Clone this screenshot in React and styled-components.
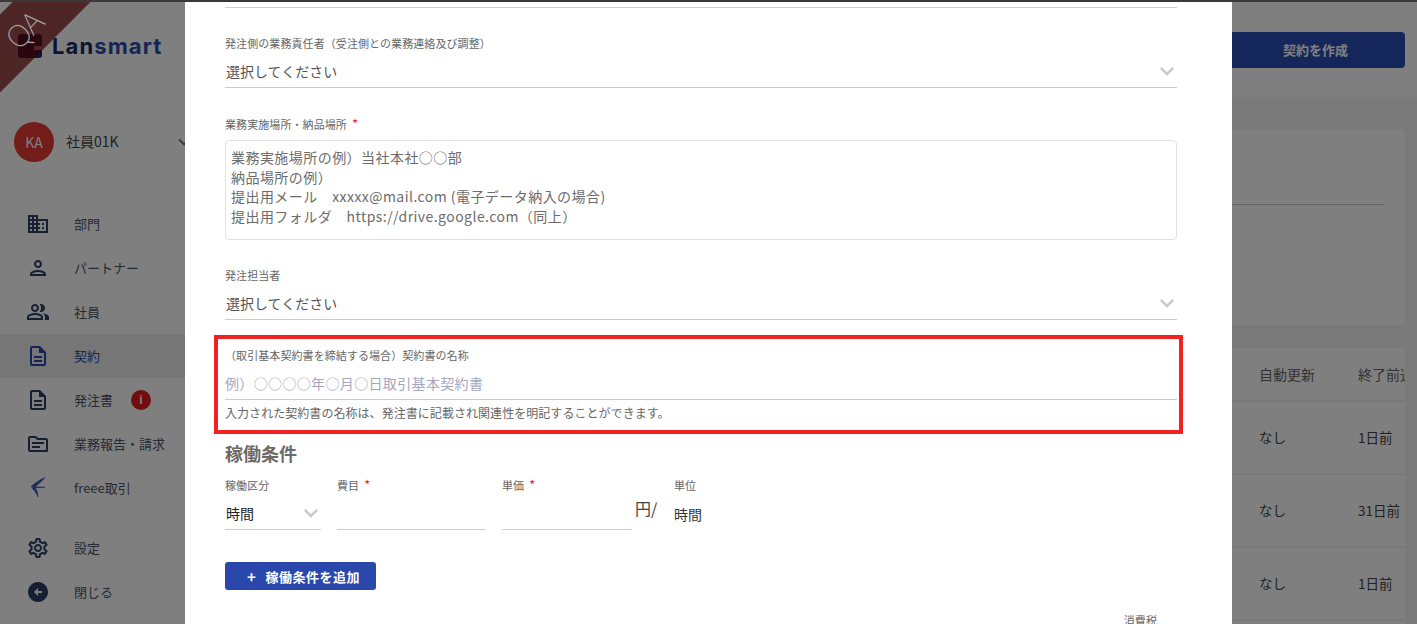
import React from 'react';
import styled, { createGlobalStyle } from 'styled-components';
import {
  MdDomain,
  MdOutlinePerson,
  MdOutlinePeopleAlt,
  MdOutlineDescription,
  MdOutlineTopic,
  MdOutlineSettings,
  MdArrowCircleLeft,
  MdKeyboardArrowDown,
} from 'react-icons/md';

const GlobalStyle = createGlobalStyle`
  html, body {
    margin: 0;
    padding: 0;
    overflow: hidden;
  }
  body {
    font-family: "Noto Sans CJK JP", "Noto Sans", sans-serif;
    color: #333;
  }
  * {
    box-sizing: border-box;
  }
`;

const Screen = styled.div`
  width: 1417px;
  height: 624px;
  display: flex;
  flex-direction: column;
  overflow: hidden;
`;

const TopStrip = styled.div`
  height: 2px;
  flex: none;
  background: #3a3a3a;
`;

const Shell = styled.div`
  position: relative;
  flex: 1;
  min-height: 0;
  display: flex;
  overflow: hidden;
`;

/* --- sidebar --- */
const Sidebar = styled.aside`
  width: 185px;
  flex: none;
  background: #fff;
  display: flex;
  flex-direction: column;
`;

const Ribbon = styled.div`
  position: absolute;
  left: -74px;
  top: -2px;
  width: 200px;
  height: 55px;
  padding-right: 6px;
  background: rgba(58, 0, 0, 0.7);
  transform: rotate(-45deg);
  display: flex;
  align-items: center;
  justify-content: center;
  color: #a4a4a4;
  font-family: "Noto Sans", sans-serif;
  font-size: 30px;
  font-weight: 200;
  letter-spacing: -1px;
  z-index: 3;
`;

const LogoRow = styled.div`
  height: 60px;
  margin-top: 14px;
  padding: 0 0 0 18px;
  display: flex;
  align-items: center;
  gap: 10px;
`;

const LogoText = styled.div`
  font-family: Inter, sans-serif;
  font-size: 22px;
  font-weight: 700;
  letter-spacing: 1.1px;
  color: #1a2a66;
  span {
    color: #2b4aaa;
  }
`;

const UserRow = styled.div`
  margin-top: 46px;
  height: 40px;
  padding-left: 14px;
  display: flex;
  align-items: center;
  position: relative;
`;

const Avatar = styled.div`
  width: 40px;
  height: 40px;
  border-radius: 50%;
  background: #e53a32;
  color: #fff;
  font-size: 14px;
  display: flex;
  align-items: center;
  justify-content: center;
`;

const UserName = styled.div`
  margin-left: 12px;
  padding-bottom: 2px;
  font-size: 14px;
  color: #444;
`;

const UserCaret = styled(MdKeyboardArrowDown)`
  position: absolute;
  right: -10px;
  top: 9px;
  color: #777;
`;

const Nav = styled.nav`
  margin-top: 40px;
  display: flex;
  flex-direction: column;
`;

const NavItem = styled.div`
  height: 44px;
  padding-left: 26px;
  display: flex;
  align-items: center;
  font-size: 13px;
  color: ${props => (props.$active ? '#2a47ab' : '#4d5566')};
  background: ${props => (props.$active ? '#ececec' : 'transparent')};
  margin-top: ${props => (props.$gap ? '16px' : '0')};

  svg {
    flex: none;
    color: ${props => (props.$active ? '#2a47ab' : '#2f3f66')};
  }
`;

const NavLabel = styled.span`
  margin-left: 24px;
  padding-bottom: 1px;
`;

const AlertDot = styled.span`
  width: 20px;
  height: 20px;
  margin-left: 18px;
  border-radius: 50%;
  background: #e01a1a;
  color: #fff;
  font-size: 12px;
  font-weight: 700;
  font-family: "Liberation Sans", sans-serif;
  display: flex;
  align-items: center;
  justify-content: center;
`;

/* --- page behind the dialog --- */
const Main = styled.main`
  flex: 1;
  min-width: 0;
  background: #f4f4f4;
  display: flex;
  flex-direction: column;
`;

const Header = styled.div`
  height: 95px;
  flex: none;
  background: #fff;
  padding: 30px 12px 0 0;
  display: flex;
  justify-content: flex-end;
`;

const CreateButton = styled.div`
  width: 300px;
  height: 36px;
  background: #2a4cb4;
  border-radius: 4px;
  color: #fff;
  font-size: 13px;
  font-weight: 700;
  display: flex;
  align-items: center;
  justify-content: flex-end;
  padding: 0 57px 2px 0;
`;

const SearchCard = styled.div`
  height: 196px;
  margin: 32px 12px 0 0;
  background: #fff;
  border-radius: 4px;
  display: flex;
  justify-content: flex-end;
  padding: 0 20px 0 0;
`;

const SearchLine = styled.div`
  width: 400px;
  height: 76px;
  border-bottom: 1px solid #ccc;
`;

const TableCard = styled.div`
  flex: 1;
  margin: 23px 12px 0 0;
  background: #fff;
`;

const TableRow = styled.div`
  height: ${props => (props.$head ? '54px' : '73px')};
  border-bottom: 2px solid #f2f2f2;
  display: flex;
  align-items: center;
  font-size: ${props => (props.$head ? '14px' : '13.5px')};
  color: ${props => (props.$head ? '#666' : '#444')};
  padding: 0 0 ${props => (props.$head ? '0' : '2px')} 1074px;
  white-space: nowrap;
  overflow: hidden;
`;

const FlagCell = styled.div`
  width: 99px;
  flex: none;
`;

/* --- dialog --- */
const Overlay = styled.div`
  position: absolute;
  inset: 0;
  background: rgba(0, 0, 0, 0.5);
  z-index: 2;
  padding-left: 185px;
`;

const Dialog = styled.div`
  width: 1047px;
  height: 100%;
  background: #fff;
  padding: 0 55px 0 40px;
  overflow: hidden;
`;

const ClippedLine = styled.div`
  height: 6px;
  border-bottom: 1px solid #d0d0d0;
`;

const Label = styled.div`
  height: 16px;
  line-height: 16px;
  font-size: 11px;
  letter-spacing: 0.08px;
  color: #666;
  white-space: nowrap;
`;

const Required = styled.span`
  margin-left: 5px;
  font-size: 13px;
  line-height: 14px;
  color: #e8242c;
`;

const Field = styled.div`
  margin-top: ${props => props.$top}px;
`;

const Select = styled.div`
  height: 37px;
  padding: 3px 0 0 1px;
  border-bottom: 1px solid #ccc;
  display: flex;
  align-items: center;
  justify-content: space-between;
  font-size: 14px;
  color: ${props => (props.$filled ? '#222' : '#555')};

  svg {
    color: #c8c8c8;
    flex: none;
    margin-right: -4px;
  }
`;

const TextArea = styled.div`
  height: 100px;
  margin-top: 8px;
  padding: 7px 5px;
  border: 1px solid #e2e2e2;
  border-radius: 4px;
  font-size: 14px;
  line-height: 19.7px;
  letter-spacing: 0.45px;
  color: #6c6c6c;
  white-space: pre-line;
`;

const Highlight = styled.div`
  margin: 15px -6px 0 -11px;
  padding: 8px 2px 9px 7px;
  border: 4px solid #f22222;
`;

const Placeholder = styled.div`
  height: 37px;
  padding-top: 3px;
  border-bottom: 1px solid #ccc;
  display: flex;
  align-items: center;
  font-size: 14px;
  letter-spacing: 0.35px;
  color: #a6a6bd;
`;

const Helper = styled.div`
  margin-top: 5px;
  height: 16px;
  line-height: 16px;
  font-size: 12px;
  letter-spacing: 0.05px;
  color: #666;
`;

const SectionTitle = styled.h2`
  margin: 7px 0 0;
  height: 24px;
  line-height: 24px;
  font-size: 18px;
  font-weight: 700;
  color: #6a6a6a;
`;

const ConditionRow = styled.div`
  margin-top: 12px;
  display: flex;
  align-items: flex-start;
`;

const Cell = styled.div`
  width: ${props => props.$width}px;
  margin-right: ${props => props.$gap || 0}px;
  flex: none;
`;

const BlankInput = styled.div`
  height: 37px;
  border-bottom: 1px solid #ccc;
`;

const UnitValue = styled.div`
  height: 37px;
  padding-top: 11px;
  line-height: 20px;
  font-size: 14px;
  color: #333;
`;

const YenMark = styled.div`
  width: 25px;
  margin: 19px 17px 0 0;
  padding-left: 3px;
  flex: none;
  font-size: 16px;
  line-height: 24px;
  color: #444;
  white-space: nowrap;
`;

const AddButton = styled.div`
  margin-top: 32px;
  width: 151px;
  height: 28px;
  padding-left: 6px;
  background: #2a47ab;
  border-radius: 3px;
  color: #fff;
  font-size: 13px;
  font-weight: 700;
  letter-spacing: 0.5px;
  display: flex;
  align-items: center;
  justify-content: center;
  gap: 9px;

  span {
    font-size: 15px;
    line-height: 15px;
  }
`;

const TaxLabel = styled(Label)`
  margin-top: 22px;
  padding-right: 20px;
  text-align: right;
`;

/* drawn marks */
const LogoMark = () => (
  <svg width="24" height="24" viewBox="0 0 24 24">
    <path d="M3 0 H21 a3 3 0 0 1 3 3 V12 H16 V16 H24 V21 a3 3 0 0 1 -3 3 H3 a3 3 0 0 1 -3 -3 V3 a3 3 0 0 1 3 -3 Z" fill="#1a2a66" />
  </svg>
);

const FreeeMark = () => (
  <svg width="24" height="24" viewBox="0 0 24 24" fill="#3550b8" stroke="#3550b8" strokeWidth="0.5" strokeLinejoin="round">
    <path d="M5 10.5 C9 7 14 3.5 19 1.5 C16 5 12 9 8 11 Z" />
    <path d="M5 10.5 L19 11.2 L8 12 Z" />
    <path d="M6 12 C8 14 10.5 17 12 21 C12 17 11 14 9 12 Z" />
  </svg>
);

const Chevron = () => <MdKeyboardArrowDown size={28} />;

const navTop = [
  { label: '部門', icon: <MdDomain size={24} /> },
  { label: 'パートナー', icon: <MdOutlinePerson size={24} /> },
  { label: '社員', icon: <MdOutlinePeopleAlt size={24} /> },
  { label: '契約', icon: <MdOutlineDescription size={24} />, active: true },
  { label: '発注書', icon: <MdOutlineDescription size={24} />, alert: true },
  { label: '業務報告・請求', icon: <MdOutlineTopic size={24} /> },
  { label: 'freee取引', icon: <FreeeMark /> },
];

const rows = [
  ['なし', '1日前'],
  ['なし', '31日前'],
  ['なし', '1日前'],
];

export default function App() {
  return (
    <Screen>
      <GlobalStyle />
      <TopStrip />
      <Shell>
        <Ribbon>QA</Ribbon>
        <Sidebar>
          <LogoRow>
            <LogoMark />
            <LogoText>Lan<span>smart</span></LogoText>
          </LogoRow>
          <UserRow>
            <Avatar>KA</Avatar>
            <UserName>社員01K</UserName>
            <UserCaret size={22} />
          </UserRow>
          <Nav>
            {navTop.map(item => (
              <NavItem key={item.label} $active={item.active}>
                {item.icon}
                <NavLabel>{item.label}</NavLabel>
                {item.alert && <AlertDot>i</AlertDot>}
              </NavItem>
            ))}
            <NavItem $gap>
              <MdOutlineSettings size={24} />
              <NavLabel>設定</NavLabel>
            </NavItem>
            <NavItem>
              <MdArrowCircleLeft size={24} />
              <NavLabel>閉じる</NavLabel>
            </NavItem>
          </Nav>
        </Sidebar>

        <Main>
          <Header>
            <CreateButton>契約を作成</CreateButton>
          </Header>
          <SearchCard>
            <SearchLine />
          </SearchCard>
          <TableCard>
            <TableRow $head>
              <FlagCell>自動更新</FlagCell>
              <span>終了前通知</span>
            </TableRow>
            {rows.map(([flag, days], i) => (
              <TableRow key={i}>
                <FlagCell>{flag}</FlagCell>
                <span>{days}</span>
              </TableRow>
            ))}
          </TableCard>
        </Main>

        <Overlay>
          <Dialog>
            <ClippedLine />

            <Field $top={27}>
              <Label>発注側の業務責任者（受注側との業務連絡及び調整）</Label>
              <Select>選択してください<Chevron /></Select>
            </Field>

            <Field $top={28}>
              <Label>業務実施場所・納品場所<Required>*</Required></Label>
              <TextArea>
                {'業務実施場所の例）当社本社○○部\n納品場所の例）\n提出用メール　xxxxx@mail.com (電子データ納入の場合)\n提出用フォルダ　https://drive.google.com（同上）'}
              </TextArea>
            </Field>

            <Field $top={27}>
              <Label>発注担当者</Label>
              <Select>選択してください<Chevron /></Select>
            </Field>

            <Highlight>
              <Label>（取引基本契約書を締結する場合）契約書の名称</Label>
              <Placeholder>例）○○○○年○月○日取引基本契約書</Placeholder>
              <Helper>入力された契約書の名称は、発注書に記載され関連性を明記することができます。</Helper>
            </Highlight>

            <SectionTitle>稼働条件</SectionTitle>
            <ConditionRow>
              <Cell $width={96} $gap={16}>
                <Label>稼働区分</Label>
                <Select $filled>時間<Chevron /></Select>
              </Cell>
              <Cell $width={149} $gap={16}>
                <Label>費目<Required>*</Required></Label>
                <BlankInput />
              </Cell>
              <Cell $width={130}>
                <Label>単価<Required>*</Required></Label>
                <BlankInput />
              </Cell>
              <YenMark>円/</YenMark>
              <Cell $width={60}>
                <Label>単位</Label>
                <UnitValue>時間</UnitValue>
              </Cell>
            </ConditionRow>

            <AddButton><span>+</span>稼働条件を追加</AddButton>
            <TaxLabel>消費税</TaxLabel>
          </Dialog>
        </Overlay>
      </Shell>
    </Screen>
  );
}
